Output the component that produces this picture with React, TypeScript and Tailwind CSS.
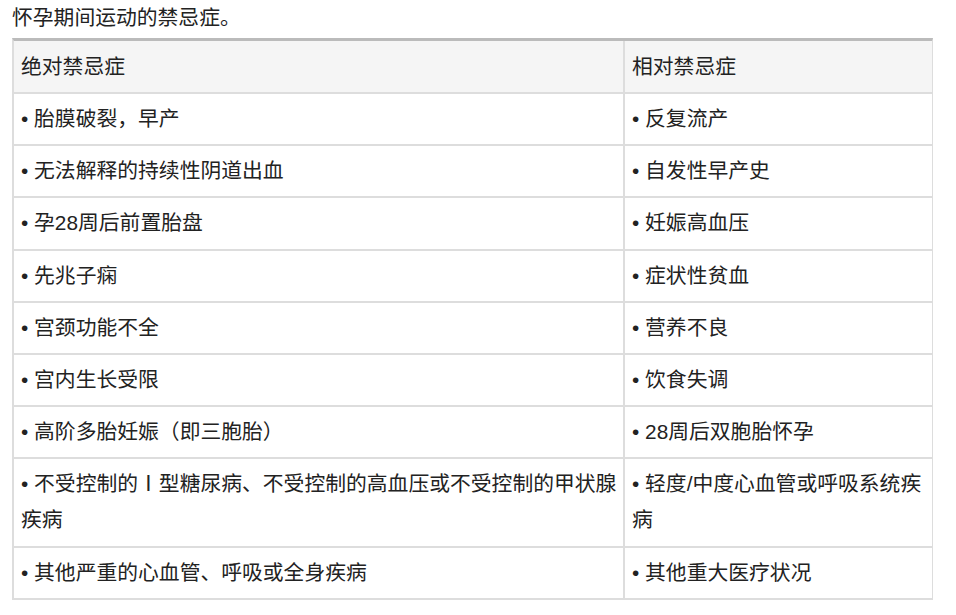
import React from "react";

const rows: [React.ReactNode, React.ReactNode][] = [
  ["• 胎膜破裂，早产", "• 反复流产"],
  ["• 无法解释的持续性阴道出血", "• 自发性早产史"],
  ["• 孕28周后前置胎盘", "• 妊娠高血压"],
  ["• 先兆子痫", "• 症状性贫血"],
  ["• 宫颈功能不全", "• 营养不良"],
  ["• 宫内生长受限", "• 饮食失调"],
  ["• 高阶多胎妊娠（即三胞胎）", "• 28周后双胞胎怀孕"],
  [
    <>
      <span className="whitespace-nowrap">• 不受控制的Ⅰ型糖尿病、不受控制的高血压或不受控制的甲状腺</span>
      <br />
      疾病
    </>,
    "• 轻度/中度心血管或呼吸系统疾病",
  ],
  ["• 其他严重的心血管、呼吸或全身疾病", "• 其他重大医疗状况"],
];

export default function App() {
  return (
    <div
      className="w-[956px] h-[615px] bg-white pl-3 text-[20.8px] leading-[36px] text-[#222]"
      style={{ fontFamily: '"Liberation Sans", "Noto Sans CJK SC", sans-serif' }}
    >
      <div className="h-[36px] mb-[2px]">怀孕期间运动的禁忌症。</div>
      <div className="w-[921px] border-t-[3px] border-t-[#bbb] border-l-2 border-l-[#ddd] border-r border-r-[#ddd]">
        <div className="grid grid-cols-[611px_1fr] bg-[#f5f5f5] border-b-2 border-b-[#ddd]">
          <div className="h-[51px] flex items-center pl-[7px] border-r-2 border-r-[#ddd]">绝对禁忌症</div>
          <div className="h-[51px] flex items-center pl-[7px]">相对禁忌症</div>
        </div>
        {rows.map(([a, b], i) => (
          <div key={i} className="grid grid-cols-[611px_1fr] border-b-2 border-b-[#ddd]">
            <div className="py-[7.1px] pl-[7px] pr-[2px] border-r-2 border-r-[#ddd]">{a}</div>
            <div className="py-[7.1px] pl-[7px] pr-[2px]">{b}</div>
          </div>
        ))}
      </div>
    </div>
  );
}
